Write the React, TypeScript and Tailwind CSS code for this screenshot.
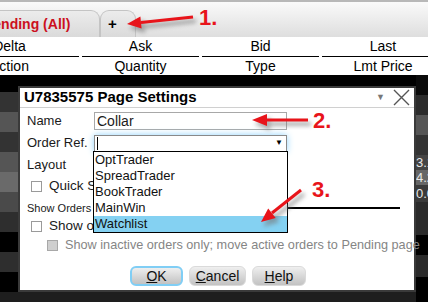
import React from 'react';

const leftRows: [string, number][] = [
  ['#000000', 17], ['#333333', 20], ['#555555', 20], ['#333333', 20], ['#555555', 20],
  ['#6a6a6a', 20], ['#4a4a4a', 20], ['#2e2e2e', 20], ['#000000', 20], ['#2e2e2e', 20],
  ['#000000', 20], ['#1e1e1e', 10],
];

const rightRows: [string, number, string][] = [
  ['#0a0a0a', 20, ''], ['#2b2b2b', 20, ''], ['#555555', 20, ''], ['#333333', 20, ''],
  ['#444444', 15, '3.15'], ['#666666', 15, '4.20'], ['#3a3a3a', 17, '0.05'],
  ['#2a2a2a', 33, ''], ['#000000', 20, ''], ['#2a2a2a', 22, ''], ['#000000', 25, ''],
];

const Checkbox = ({ disabled }: { disabled?: boolean }) => (
  <span
    className={
      disabled
        ? 'w-[11px] h-[11px] shrink-0 border border-[#a8a8a8] bg-[#cfcfcf]'
        : 'w-[11px] h-[11px] shrink-0 border border-[#9a9a9a] bg-white'
    }
  />
);

const Btn = ({ first, rest, w, focus }: { first: string; rest: string; w: string; focus?: boolean }) => (
  <div
    className={`${w} h-[20px] flex items-center justify-center rounded-[6px] bg-linear-to-b from-[#efefef] to-[#c2c2c2] text-[14px] text-[#111] ${
      focus ? 'border-2 border-[#80cef5]' : 'border border-[#dadada]'
    }`}
  >
    <span className="underline">{first}</span>
    {rest}
  </div>
);

const App = () => {
  const items = ['OptTrader', 'SpreadTrader', 'BookTrader', 'MainWin', 'Watchlist'];

  return (
    <div className="relative w-[428px] h-[302px] overflow-hidden bg-black font-['Liberation_Sans',Arial,sans-serif]">
      {/* tab strip */}
      <div className="h-[37px] border-t-2 border-[#b8b8b8] bg-linear-to-b from-[#fafafa] to-[#dedede] flex items-end">
        <div className="ml-[-26px] w-[126px] h-[27px] rounded-tr-[9px] border border-b-0 border-[#c4c4c4] bg-linear-to-b from-[#ececec] to-[#dadada] flex items-center pl-[9px] text-[14px] font-bold text-[#cc1020]">
          Pending (All)
        </div>
        <div className="w-[36px] h-[27px] rounded-t-[9px] border border-b-0 border-[#c4c4c4] bg-linear-to-b from-[#ececec] to-[#dadada] flex items-center pl-[7px] text-[15px] font-bold text-black">
          +
        </div>
      </div>

      {/* column headers */}
      <div className="bg-white h-[38px] ml-[-60px] grid grid-cols-[139px_117px_117px_122px] gap-x-[3px] text-[14px] text-black">
        {['Delta', 'Ask', 'Bid', 'Last'].map((h) => (
          <div key={h} className="h-[20px] flex items-center justify-center border-b border-black">
            {h}
          </div>
        ))}
        {['Action', 'Quantity', 'Type', 'Lmt Price'].map((h) => (
          <div key={h} className="h-[18px] flex items-center justify-center">
            {h}
          </div>
        ))}
      </div>

      {/* dark order grid */}
      <div className="flex h-[227px]">
        <div className="w-[18px] flex flex-col">
          {leftRows.map(([c, h], i) => (
            <div key={i} style={{ backgroundColor: c, height: h }} />
          ))}
        </div>
        <div className="flex-1 flex flex-col justify-end bg-black">
          <div className="h-[10px] bg-[#1e1e1e]" />
        </div>
        <div className="w-[12px] flex flex-col overflow-hidden">
          {rightRows.map(([c, h, t], i) => (
            <div
              key={i}
              className="text-[13px] text-[#e8e8e8] leading-none flex items-center whitespace-nowrap"
              style={{ backgroundColor: c, height: h }}
            >
              {t}
            </div>
          ))}
        </div>
      </div>

      {/* settings dialog */}
      <div className="absolute left-[18px] top-[86px] w-[398px] h-[206px] border-2 border-[#3a3a3a] bg-white text-[13px] text-[#1a1a1a]">
        <div className="h-[20px] border-b border-[#d0d0d0] flex items-center pl-[4px] pr-[4px]">
          <span className="text-[15px] font-bold text-black">U7835575 Page Settings</span>
          <span className="ml-auto mr-[8px] text-[9px] text-[#777]">▼</span>
          <svg width="17" height="17" viewBox="0 0 17 17">
            <path d="M1 1 L16 16 M16 1 L1 16" stroke="#555" strokeWidth="1.4" fill="none" />
          </svg>
        </div>

        <div className="pl-[7px]">
          <div className="mt-[4px] h-[18px] flex items-center">
            <span className="w-[67px]">Name</span>
            <div className="w-[193px] h-[18px] border border-[#a8a8a8] flex items-center pl-[2px] text-[14px]">Collar</div>
          </div>
          <div className="mt-[4px] h-[18px] flex items-center">
            <span className="w-[67px]">Order Ref.</span>
            <div className="w-[193px] h-[17px] border border-[#8a8a8a] bg-white shadow-[0_0_7px_#8fd4ff] flex items-center pl-[2px] pr-[3px]">
              <span className="w-px h-[13px] bg-black" />
              <span className="ml-auto text-[8px] text-black">▼</span>
            </div>
          </div>
          <div className="mt-[4px] h-[18px] flex items-center">
            <span>Layout</span>
          </div>
          <div className="mt-[3px] h-[18px] flex items-center pl-[4px] gap-[7px]">
            <Checkbox />
            <span className="text-[13.5px]">Quick Stage</span>
          </div>
          <div className="mt-[4px] h-[18px] flex items-center pr-[14px]">
            <span className="text-[11px] mr-[2px]">Show Orders</span>
            <div className="flex-1 h-[2px] bg-black" />
          </div>
          <div className="h-[19px] flex items-center pl-[4px] gap-[7px]">
            <Checkbox />
            <span className="text-[13.5px]">Show orders</span>
          </div>
          <div className="h-[19px] flex items-center pl-[20px] gap-[7px]">
            <Checkbox disabled />
            <span className="text-[12.7px] text-[#858585] whitespace-nowrap">Show inactive orders only; move active orders to Pending page</span>
          </div>
          <div className="mt-[11px] ml-[103px] flex gap-[6px]">
            <Btn first="O" rest="K" w="w-[53px]" focus />
            <Btn first="C" rest="ancel" w="w-[57px]" />
            <Btn first="H" rest="elp" w="w-[54px]" />
          </div>
        </div>

        {/* open combo list */}
        <div className="absolute left-[73px] top-[63px] w-[195px] border border-black bg-white text-[13px] text-[#111]">
          {items.map((it) => (
            <div
              key={it}
              className={`h-[16px] flex items-center pl-[1px] ${it === 'Watchlist' ? 'bg-[#84d1f2]' : ''}`}
            >
              {it}
            </div>
          ))}
        </div>
      </div>

      {/* annotation arrows */}
      <svg className="absolute left-0 top-0 pointer-events-none" width="428" height="302" viewBox="0 0 428 302">
        <defs>
          <filter id="sh" x="-20%" y="-50%" width="140%" height="200%">
            <feGaussianBlur stdDeviation="2" />
          </filter>
        </defs>
        <g fill="#777" stroke="#777" opacity="0.6" filter="url(#sh)" transform="translate(3 4)">
          <path d="M193 17 L141 22.5" strokeWidth="4" />
          <polygon points="127,24 141.6,28.5 140.4,16.5" />
          <path d="M308 120 L266 120" strokeWidth="4" />
          <polygon points="252,120 267,114 267,126" />
          <path d="M301 190 L272 213" strokeWidth="4" />
          <polygon points="261,222 275.7,217.9 268.2,208.5" />
        </g>
        <g fill="#e8141a" stroke="#e8141a">
          <path d="M193 17 L141 22.5" strokeWidth="3" />
          <polygon points="127,24 141.6,28.5 140.4,16.5" strokeWidth="0" />
          <path d="M308 120 L266 120" strokeWidth="3" />
          <polygon points="252,120 267,114 267,126" strokeWidth="0" />
          <path d="M301 190 L272 213" strokeWidth="3" />
          <polygon points="261,222 275.7,217.9 268.2,208.5" strokeWidth="0" />
        </g>
      </svg>
      <span className="absolute left-[199px] top-[7px] text-[22px] font-bold text-[#e8141a] leading-none">1.</span>
      <span className="absolute left-[313px] top-[110px] text-[22px] font-bold text-[#e8141a] leading-none">2.</span>
      <span className="absolute left-[312px] top-[179px] text-[22px] font-bold text-[#e8141a] leading-none">3.</span>
    </div>
  );
};

export default App;
